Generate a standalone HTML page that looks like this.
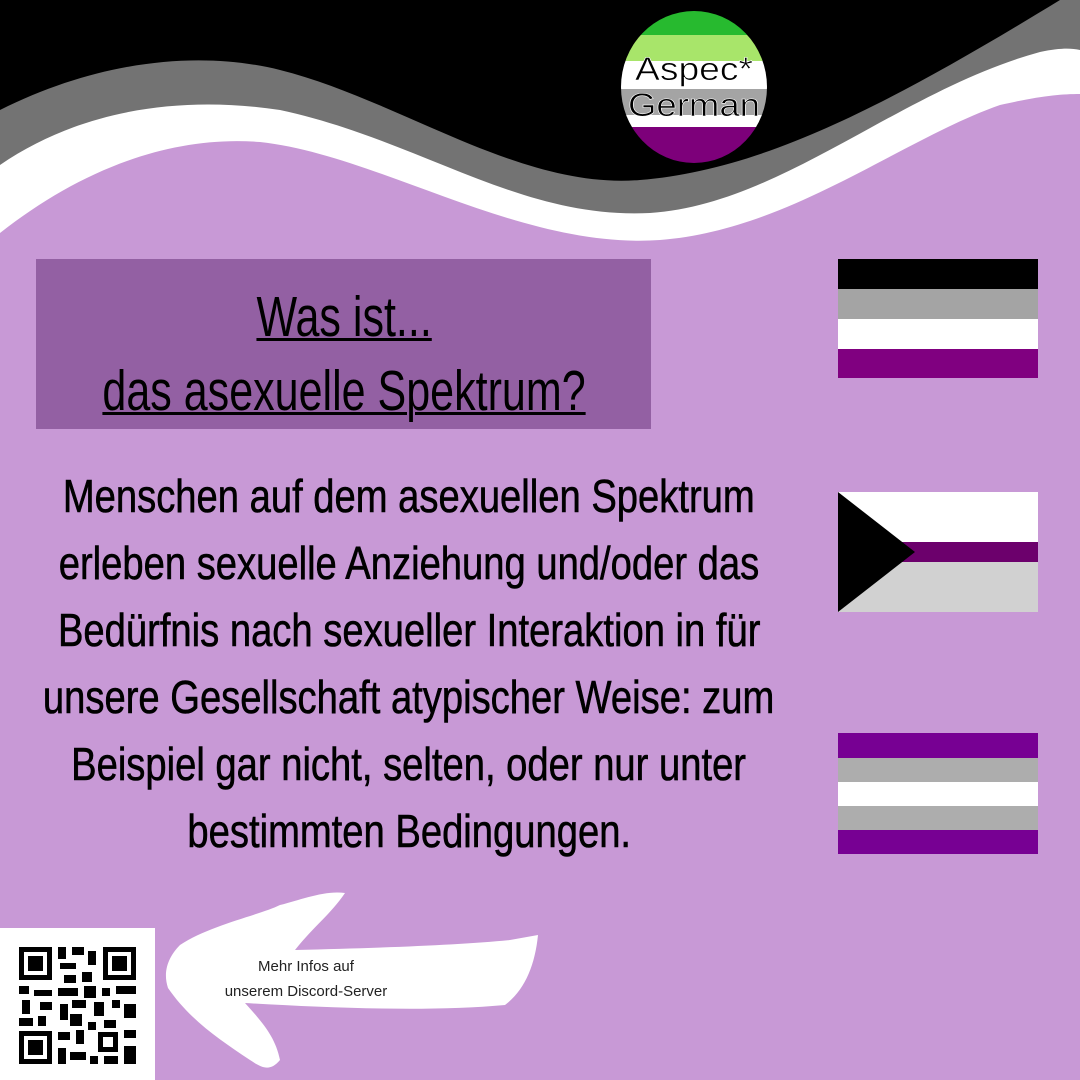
<!DOCTYPE html>
<html><head><meta charset="utf-8"><style>
body{margin:0;width:1080px;height:1080px;overflow:hidden;background:#c899d6;font-family:"Liberation Sans",sans-serif;position:relative}
.abs{position:absolute}
.line{position:absolute;left:0;width:1080px;text-align:center;white-space:nowrap}
.line span{display:inline-block;transform:scaleX(0.83);transform-origin:center}
</style></head><body>
<svg class="abs" style="left:0;top:0" width="1080" height="1080" viewBox="0 0 1080 1080">
<rect width="1080" height="260" fill="#000"/>
<path d="M0 110 C100 60 200 50 280 70 C400 100 520 190 640 180 C760 170 880 110 1060 0 L1080 0 L1080 260 L0 260Z" fill="#737373"/>
<path d="M0 165 C80 110 180 95 280 110 C420 140 520 220 650 213 C780 205 900 90 1040 52 C1060 48 1070 48 1080 50 L1080 260 L0 260Z" fill="#fff"/>
<path d="M0 233 C80 170 170 135 260 142 C380 155 520 250 660 240 C790 230 900 140 1000 105 C1040 96 1060 94 1080 94 L1080 260 L0 260Z" fill="#c899d6"/>
<defs><clipPath id="c"><ellipse cx="694" cy="87" rx="73" ry="76"/></clipPath></defs>
<g clip-path="url(#c)">
<rect x="600" y="0" width="200" height="35" fill="#27ba2f"/>
<rect x="600" y="35" width="200" height="26" fill="#a8e56a"/>
<rect x="600" y="61" width="200" height="28" fill="#fff"/>
<rect x="600" y="89" width="200" height="26" fill="#a4a4a4"/>
<rect x="600" y="115" width="200" height="12" fill="#fff"/>
<rect x="600" y="127" width="200" height="40" fill="#7d007a"/>
</g>
<text x="694" y="80" text-anchor="middle" font-family="Liberation Sans" font-size="32" fill="#000" stroke="#fff" stroke-width="0.6" textLength="118" lengthAdjust="spacingAndGlyphs">Aspec*</text>
<text x="694" y="116" text-anchor="middle" font-family="Liberation Sans" font-size="32" fill="#000" stroke="#fff" stroke-width="0.6" textLength="132" lengthAdjust="spacingAndGlyphs">German</text>
<rect x="36" y="259" width="615" height="170" fill="#9360a3"/>
<rect x="838" y="259" width="200" height="30" fill="#000"/>
<rect x="838" y="289" width="200" height="30" fill="#a4a4a4"/>
<rect x="838" y="319" width="200" height="30" fill="#fff"/>
<rect x="838" y="349" width="200" height="29" fill="#800080"/>
<rect x="838" y="492" width="200" height="50" fill="#fff"/>
<rect x="838" y="542" width="200" height="20" fill="#6c006c"/>
<rect x="838" y="562" width="200" height="50" fill="#d1d1d1"/>
<path d="M838 492 L915 552 L838 612Z" fill="#000"/>
<rect x="838" y="733" width="200" height="25" fill="#770093"/>
<rect x="838" y="758" width="200" height="24" fill="#adadad"/>
<rect x="838" y="782" width="200" height="24" fill="#fff"/>
<rect x="838" y="806" width="200" height="24" fill="#adadad"/>
<rect x="838" y="830" width="200" height="24" fill="#770093"/>
<rect x="0" y="928" width="155" height="152" fill="#fff"/>
<path d="M180 945 C210 925 260 915 280 905 C300 900 325 890 345 893 C330 915 315 925 295 950 C380 948 460 945 510 940 L538 935 C535 965 525 990 505 1005 C430 1012 330 1008 245 1003 C260 1020 275 1035 280 1060 C270 1072 262 1068 250 1060 C220 1040 190 1020 168 988 C162 970 170 955 180 945Z" fill="#fff"/>
<g fill="#000">
<rect x="19" y="947" width="33" height="33"/><rect x="24" y="952" width="23" height="23" fill="#fff"/><rect x="28" y="956" width="15" height="15"/>
<rect x="103" y="947" width="33" height="33"/><rect x="108" y="952" width="23" height="23" fill="#fff"/><rect x="112" y="956" width="15" height="15"/>
<rect x="19" y="1031" width="33" height="33"/><rect x="24" y="1036" width="23" height="23" fill="#fff"/><rect x="28" y="1040" width="15" height="15"/>
<rect x="58" y="947" width="8" height="12"/><rect x="72" y="947" width="12" height="8"/><rect x="88" y="951" width="8" height="14"/><rect x="60" y="963" width="16" height="6"/><rect x="64" y="975" width="12" height="8"/><rect x="82" y="972" width="10" height="10"/>
<rect x="19" y="986" width="10" height="8"/><rect x="34" y="990" width="18" height="6"/><rect x="58" y="988" width="20" height="8"/><rect x="84" y="986" width="12" height="12"/><rect x="102" y="988" width="8" height="8"/><rect x="116" y="986" width="20" height="8"/>
<rect x="22" y="1000" width="8" height="14"/><rect x="40" y="1002" width="12" height="8"/><rect x="60" y="1004" width="8" height="16"/><rect x="72" y="1000" width="14" height="8"/><rect x="94" y="1002" width="10" height="14"/><rect x="112" y="1000" width="8" height="8"/><rect x="124" y="1004" width="12" height="14"/>
<rect x="19" y="1018" width="14" height="8"/><rect x="38" y="1016" width="8" height="10"/><rect x="70" y="1014" width="12" height="12"/><rect x="88" y="1022" width="8" height="8"/><rect x="104" y="1020" width="12" height="8"/>
<rect x="58" y="1032" width="12" height="8"/><rect x="76" y="1030" width="8" height="14"/><rect x="98" y="1032" width="20" height="20"/><rect x="103" y="1037" width="10" height="10" fill="#fff"/><rect x="124" y="1030" width="12" height="8"/>
<rect x="58" y="1048" width="8" height="16"/><rect x="70" y="1052" width="16" height="8"/><rect x="90" y="1056" width="8" height="8"/><rect x="104" y="1056" width="14" height="8"/><rect x="124" y="1046" width="12" height="18"/>
</g>
</svg>
<div class="line" style="left:-196px;top:282px;font-size:57px;line-height:70px"><span style="text-decoration:underline;text-decoration-thickness:3px;transform:scaleX(0.755)">Was ist...</span></div>
<div class="line" style="left:-196px;top:356px;font-size:57px;line-height:70px"><span style="text-decoration:underline;text-decoration-thickness:3px;transform:scaleX(0.755)">das asexuelle Spektrum?</span></div>
<div style="position:absolute;left:-131px;top:463px;font-size:46px;line-height:67px;color:#000;-webkit-text-stroke:0.6px #000">
<div class="line" style="position:relative"><span>Menschen auf dem asexuellen Spektrum</span></div>
<div class="line" style="position:relative"><span>erleben sexuelle Anziehung und/oder das</span></div>
<div class="line" style="position:relative"><span>Bedürfnis nach sexueller Interaktion in für</span></div>
<div class="line" style="position:relative"><span>unsere Gesellschaft atypischer Weise: zum</span></div>
<div class="line" style="position:relative"><span>Beispiel gar nicht, selten, oder nur unter</span></div>
<div class="line" style="position:relative"><span>bestimmten Bedingungen.</span></div>
</div>
<div class="abs" style="left:196px;top:954px;width:220px;text-align:center;font-size:15px;line-height:25px;color:#222">Mehr Infos auf<br>unserem Discord-Server</div>
</body></html>
